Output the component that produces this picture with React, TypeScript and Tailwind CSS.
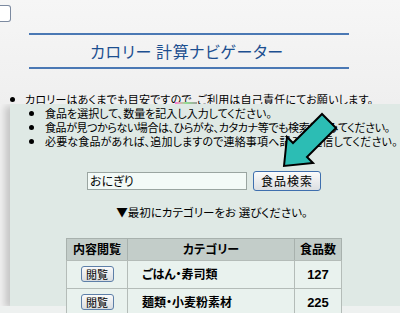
import React from "react";

const jp = "font-['Noto_Sans_CJK_JP','Noto_Sans',sans-serif] [font-feature-settings:'palt']";

export default function App() {
  return (
    <div className={`relative w-[400px] h-[313px] overflow-hidden bg-[#f1f1f1] text-black ${jp}`}>
      {/* top page */}
      <div className="relative h-[104px] overflow-hidden bg-gradient-to-b from-[#f6f6f6] to-[#efefef]">
        <div className="pt-[5px]">
          <div className="w-[11px] h-[17px] border border-l-0 border-[#7c8aa0] rounded-r-[3px] bg-white" />
        </div>
        <div className="mt-[11px] ml-[29px] w-[320px] h-[36px] border-t-2 border-b-2 border-[#4a78b4] flex items-center justify-center">
          <span className="text-[16px] leading-none text-[#1c4f90] tracking-[0.6px] pr-[4px]">カロリー 計算ナビゲーター</span>
        </div>
        <div className="mt-[23px] flex items-center h-[14px]">
          <div className="shrink-0 ml-[10px] w-[5px] h-[5px] rounded-full bg-black" />
          <span className="ml-[10px] text-[11px] leading-none whitespace-nowrap tracking-[0.2px]">カロリーはあくまでも目安ですので、ご利用は自己責任にてお願いします。</span>
        </div>
        <div className="absolute left-[175px] top-[102px] w-[22px] h-[4px] bg-gradient-to-r from-[#ff6fd0] via-[#8fe08f] to-[#a0a0a0]" />
      </div>

      {/* magnified pane */}
      <div className="ml-[10px] h-[202px] bg-[#dfe9e5] shadow-[-5px_2px_7px_rgba(0,0,0,0.18)] flex flex-col">
        <div className="pt-[2px] flex flex-col">
          {[
            ["食品を選択して、数量を記入し入力してください。", "tracking-[0px]"],
            ["食品が見つからない場合は、ひらがな、カタカナ等でも検索してみてください。", "tracking-[-0.4px]"],
            ["必要な食品があれば、追加しますので連絡事項へ記入し送信してください。", "tracking-[0.15px]"],
          ].map(([t, tr]) => (
            <div key={t} className="flex items-center h-[14px]">
              <div className="shrink-0 ml-[19px] w-[5px] h-[5px] rounded-full bg-black" />
              <span className={`shrink-0 ml-[11px] text-[11px] leading-none whitespace-nowrap ${tr}`}>{t}</span>
            </div>
          ))}
        </div>

        <div className="mt-[23px] ml-[77px] flex items-center gap-[6px]">
          <div className="w-[160px] h-[18px] bg-[#f3faf7] border border-[#9aa5a1] flex items-center pl-[2px] text-[12px] leading-none">おにぎり</div>
          <div className="w-[68px] h-[20px] rounded-[3px] border border-[#3f6fae] bg-gradient-to-b from-[#fbfbfb] to-[#dcdfe2] flex items-center justify-center text-[12px] leading-none tracking-[1px]">食品検索</div>
        </div>

        <div className="mt-[16px] text-center text-[11.5px] leading-none pl-[14px]">▼最初にカテゴリーをお 選びください。</div>

        <div className="mt-[19px] ml-[56px] w-[276px]">
          <div className="flex h-[22px] bg-[#c3cdc9] border-t border-l border-r border-[#a8b1ad] text-[12px] font-bold leading-none">
            <div className="w-[61px] flex items-center justify-center border-r border-[#a8b1ad]">内容閲覧</div>
            <div className="w-[167px] flex items-center justify-center border-r border-[#a8b1ad]">カテゴリー</div>
            <div className="flex-1 flex items-center justify-center">食品数</div>
          </div>
          {[
            ["ごはん・寿司類", "127"],
            ["麺類・小麦粉素材", "225"],
          ].map(([c, n]) => (
            <div key={c} className="flex h-[28px] bg-[#e9f2ee] border-t border-l border-r border-[#b4bcb8] text-[12px] font-bold leading-none">
              <div className="w-[61px] flex items-center justify-center border-r border-[#b4bcb8]">
                <div className="w-[33px] h-[16px] rounded-[3px] border border-[#5d7fa8] bg-gradient-to-b from-[#fafafa] to-[#d9dde1] flex items-center justify-center text-[11px] font-normal">閲覧</div>
              </div>
              <div className="w-[167px] flex items-center pl-[14px] border-r border-[#b4bcb8]">{c}</div>
              <div className="flex-1 flex items-center justify-center font-['Liberation_Sans',sans-serif] text-[13px]">{n}</div>
            </div>
          ))}
        </div>
      </div>
      <div className="h-[7px] bg-[#eef1f0]" />

      {/* arrow */}
      <svg className="absolute left-0 top-0 pointer-events-none" width="400" height="313" viewBox="0 0 400 313">
        <polygon
          points="284,166 287,137 293,143 322,114 336,128 307,157 313,163"
          fill="#2cbdb4"
          stroke="#000"
          strokeWidth="2"
          strokeLinejoin="miter"
        />
      </svg>
    </div>
  );
}
